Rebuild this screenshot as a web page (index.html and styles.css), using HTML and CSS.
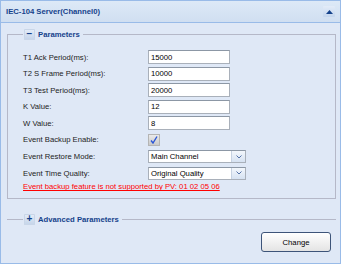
FILE: index.html
```html
<!DOCTYPE html>
<html lang="en">
<head>
    <meta charset="UTF-8">
    <meta name="viewport" content="width=device-width, initial-scale=1.0">
    <title>IEC-104 Server</title>
    <link rel="stylesheet" href="styles.css">
</head>
<body>
    <div class="panel">
        <div class="panel-header">
            <span class="panel-title">IEC-104 Server(Channel0)</span>
            <span class="tool-btn">
                <svg width="7" height="4" viewBox="0 0 7 4"><polygon points="0,4 3.5,0 7,4" fill="#15428b"/></svg>
            </span>
        </div>
        <div class="panel-body">
            <fieldset class="group">
                <legend><span class="toggle">&minus;</span>Parameters</legend>
                <div class="form-grid">
                    <label>T1 Ack Period(ms):</label>
                    <input class="field" type="text" value="15000">
                    <label>T2 S Frame Period(ms):</label>
                    <input class="field" type="text" value="10000">
                    <label>T3 Test Period(ms):</label>
                    <input class="field" type="text" value="20000">
                    <label>K Value:</label>
                    <input class="field" type="text" value="12">
                    <label>W Value:</label>
                    <input class="field" type="text" value="8">
                    <label>Event Backup Enable:</label>
                    <span class="check">
                        <svg width="8" height="8" viewBox="0 0 8 8"><path d="M1 4.5 L3 7 L7 0.5" fill="none" stroke="#2a55d6" stroke-width="1.4"/></svg>
                    </span>
                    <label>Event Restore Mode:</label>
                    <div class="combo"><span class="combo-text">Main Channel</span><span class="combo-trigger"><svg width="6" height="4" viewBox="0 0 6 4"><path d="M0.5 0.5 L3 3 L5.5 0.5" fill="none" stroke="#5573a8" stroke-width="1"/></svg></span></div>
                    <label>Event Time Quality:</label>
                    <div class="combo"><span class="combo-text">Original Quality</span><span class="combo-trigger"><svg width="6" height="4" viewBox="0 0 6 4"><path d="M0.5 0.5 L3 3 L5.5 0.5" fill="none" stroke="#5573a8" stroke-width="1"/></svg></span></div>
                </div>
                <div class="warning">Event backup feature is not supported by PV: 01 02 05 06</div>
            </fieldset>
            <fieldset class="group collapsed">
                <legend><span class="toggle">+</span>Advanced Parameters</legend>
            </fieldset>
            <div class="actions">
                <button class="btn">Change</button>
            </div>
        </div>
    </div>
</body>
</html>
```

FILE: styles.css
```css
/* Global Styles */
body {
    margin: 0;
    padding: 0;
    font-family: 'Liberation Sans', Arial, sans-serif;
    font-size: 7.7px;
    color: #000;
    background: #fff;
}

.panel {
    width: 339px;
    height: 262px;
    border: 1px solid #99bbe8;
    background: #dfe8f6;
    display: flex;
    flex-direction: column;
}

.panel-header {
    height: 21px;
    border-bottom: 1px solid #99bbe8;
    background: linear-gradient(#dde9f7, #d0dff1);
    display: flex;
    align-items: center;
    justify-content: space-between;
    padding: 0 5px;
}

.panel-title {
    font-weight: bold;
    color: #15428b;
}

.tool-btn {
    width: 12px;
    height: 11px;
    border-radius: 1px;
    background: linear-gradient(#e3ecf8, #c4d6ee);
    display: flex;
    justify-content: center;
    align-items: center;
}

.panel-body {
    flex: 1;
    display: flex;
    flex-direction: column;
}

.group {
    margin: 5px 4px 0 6px;
    padding: 10px 15px 6px 15px;
    border: 1px solid #b5b8c8;
    min-width: 0;
}

.group legend {
    padding: 0 3px 0 1px;
    height: 12px;
    display: flex;
    align-items: center;
    gap: 3px;
    font-weight: bold;
    color: #15428b;
}

.toggle {
    width: 11px;
    height: 11px;
    border-radius: 1px;
    background: linear-gradient(#e6eef9, #c3d3e9);
    box-shadow: inset 0 0 0 1px #c9d6e8;
    display: flex;
    justify-content: center;
    align-items: center;
    font-size: 10px;
    line-height: 1;
    color: #15428b;
}

.group.collapsed {
    margin-top: 14px;
    padding: 0 0 0 16px;
    border-width: 1px 0 0 0;
}

.form-grid {
    display: grid;
    grid-template-columns: 125px auto;
    grid-auto-rows: 14px;
    row-gap: 2.6px;
    align-items: center;
    justify-items: start;
}

.form-grid label {
    color: #222;
}

.field {
    box-sizing: border-box;
    width: 82px;
    height: 14px;
    margin: 0;
    padding: 0 2px;
    border: 1px solid #a9b0ba;
    border-top-color: #8c97a5;
    background: #fff;
    font-family: inherit;
    font-size: 7.7px;
    color: #000;
    outline: none;
}

.check {
    box-sizing: border-box;
    width: 12px;
    height: 12px;
    border: 1px solid #b4b4b4;
    background: linear-gradient(#eaeaea, #c9c9c9);
    display: flex;
    justify-content: center;
    align-items: center;
}

.combo {
    box-sizing: border-box;
    width: 98px;
    height: 13px;
    border: 1px solid #a9b0ba;
    border-top-color: #8c97a5;
    background: #fff;
    display: flex;
    align-items: center;
}

.combo-text {
    flex: 1;
    padding-left: 2px;
}

.combo-trigger {
    width: 13px;
    height: 11px;
    border-left: 1px solid #c6d2e2;
    background: linear-gradient(#f3f7fc, #d6e2f2);
    display: flex;
    justify-content: center;
    align-items: center;
}

.warning {
    margin-top: 2px;
    line-height: 10px;
    color: #ff0000;
    text-decoration: underline;
}

.actions {
    display: flex;
    justify-content: flex-end;
    padding: 7px 9px 0 0;
}

.btn {
    width: 70px;
    height: 20px;
    padding: 0;
    border: 1px solid #3d5479;
    border-radius: 3px;
    background: linear-gradient(#ffffff, #e4e4e4);
    font-family: inherit;
    font-size: 7.7px;
    color: #000;
    cursor: pointer;
}
```
